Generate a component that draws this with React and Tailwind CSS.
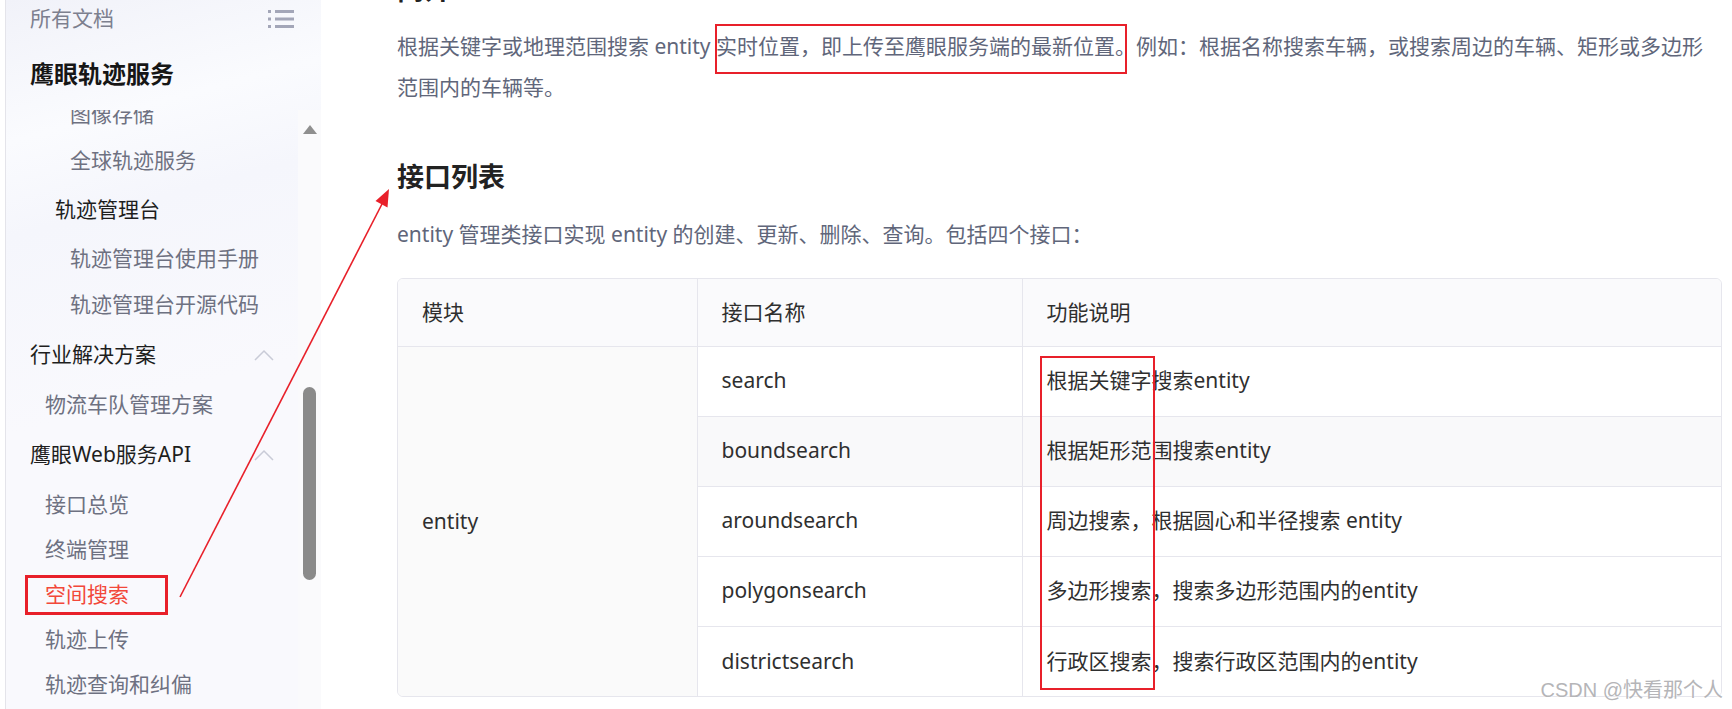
import React from 'react'

const navItems = [
  { label: '图像存储', pad: 'pl-[64px]', height: 'h-[46px]', tone: 'leaf' },
  { label: '全球轨迹服务', pad: 'pl-[64px]', height: 'h-[46px]', tone: 'leaf' },
  { label: '轨迹管理台', pad: 'pl-[49px]', height: 'h-[52px]', tone: 'sub' },
  { label: '轨迹管理台使用手册', pad: 'pl-[64px]', height: 'h-[46px]', tone: 'leaf' },
  { label: '轨迹管理台开源代码', pad: 'pl-[64px]', height: 'h-[46px]', tone: 'leaf' },
  { label: '行业解决方案', pad: 'pl-[24px]', height: 'h-[54px]', tone: 'head', chevron: true },
  { label: '物流车队管理方案', pad: 'pl-[39px]', height: 'h-[46px]', tone: 'leaf' },
  { label: '鹰眼Web服务API', pad: 'pl-[24px]', height: 'h-[54px]', tone: 'head', chevron: true },
  { label: '接口总览', pad: 'pl-[39px]', height: 'h-[45px]', tone: 'leaf' },
  { label: '终端管理', pad: 'pl-[39px]', height: 'h-[45px]', tone: 'leaf' },
  { label: '空间搜索', pad: 'pl-[19px]', height: 'h-[45px]', tone: 'active' },
  { label: '轨迹上传', pad: 'pl-[39px]', height: 'h-[45px]', tone: 'leaf' },
  { label: '轨迹查询和纠偏', pad: 'pl-[39px]', height: 'h-[45px]', tone: 'leaf' },
]

const rows = [
  { name: 'search', desc: '根据关键字搜索entity', bg: 'bg-white' },
  { name: 'boundsearch', desc: '根据矩形范围搜索entity', bg: 'bg-[#f9f9fa]' },
  { name: 'aroundsearch', desc: '周边搜索，根据圆心和半径搜索 entity', bg: 'bg-white' },
  { name: 'polygonsearch', desc: '多边形搜索，搜索多边形范围内的entity', bg: 'bg-white' },
  { name: 'districtsearch', desc: '行政区搜索，搜索行政区范围内的entity', bg: 'bg-white' },
]

function ListIcon() {
  return (
    <svg width="26" height="18" viewBox="0 0 26 18" className="text-[#a3a6b8]">
      <rect x="0" y="0" width="3" height="3" fill="currentColor" />
      <rect x="7" y="0" width="19" height="3" fill="currentColor" />
      <rect x="0" y="7.5" width="3" height="3" fill="currentColor" />
      <rect x="7" y="7.5" width="19" height="3" fill="currentColor" />
      <rect x="0" y="15" width="3" height="3" fill="currentColor" />
      <rect x="7" y="15" width="19" height="3" fill="currentColor" />
    </svg>
  )
}

function Chevron() {
  return (
    <svg width="20" height="12" viewBox="0 0 20 12" fill="none">
      <polyline points="1,11 10,2 19,11" stroke="#c9cbd7" strokeWidth="1.5" />
    </svg>
  )
}

function NavItem({ item }) {
  if (item.tone === 'active') {
    return (
      <div className={`flex items-center ${item.height} ${item.pad}`}>
        <div className="flex h-[40px] w-[143px] items-center border-[3px] border-[#e8202a] pl-[17px] text-[#f2483a]">
          {item.label}
        </div>
      </div>
    )
  }

  const tone = item.tone === 'leaf' ? 'text-[#6e7181]' : 'text-[#1e1e1e]'

  return (
    <div className={`flex items-center justify-between pr-[24px] ${item.height} ${item.pad} ${tone}`}>
      <span>{item.label}</span>
      {item.chevron && <Chevron />}
    </div>
  )
}

function Sidebar() {
  return (
    <aside className="ml-[5px] flex h-full w-[316px] shrink-0 flex-col border-l border-[#e4e4ea] bg-[linear-gradient(165deg,#f1f2f9_0%,#fafbfe_18%,#f5f6fc_30%,#f9f9fd_55%,#f9f9fd_100%)] text-[21px]">
      <div className="flex h-[38px] items-center justify-between pl-[24px] pr-[27px]">
        <span className="text-[#7d808f]">所有文档</span>
        <ListIcon />
      </div>
      <div className="mt-[16px] flex h-[40px] items-center pl-[24px] text-[24px] font-bold text-[#161616]">
        鹰眼轨迹服务
      </div>
      <div className="mt-[16px] flex min-h-0 flex-1">
        <div className="min-w-0 flex-1 overflow-hidden">
          <div className="-mt-[18px]">
            {navItems.map((item) => (
              <NavItem key={item.label} item={item} />
            ))}
          </div>
        </div>
        <div className="relative w-[23px] shrink-0 bg-[#fafafc]">
          <div className="absolute left-[5px] top-[15px] h-0 w-0 border-x-[7px] border-b-[9px] border-x-transparent border-b-[#8f8f8f]" />
          <div className="absolute left-[5px] top-[277px] h-[193px] w-[13px] rounded-full bg-[#8a8a8a]" />
        </div>
      </div>
    </aside>
  )
}

function InterfaceTable() {
  return (
    <div className="relative mt-[23px] overflow-hidden rounded-[6px] border border-[#e6e6ed]">
      <table className="w-full border-collapse text-left text-[21px] text-[#2f2f2f]">
        <colgroup>
          <col className="w-[299px]" />
          <col className="w-[325px]" />
          <col />
        </colgroup>
        <thead>
          <tr className="bg-[#fafafc]">
            <th className="h-[67px] border-b border-r border-[#e6e6ed] pl-6 font-normal">模块</th>
            <th className="h-[67px] border-b border-r border-[#e6e6ed] pl-6 font-normal">接口名称</th>
            <th className="h-[67px] border-b border-[#e6e6ed] pl-6 font-normal">功能说明</th>
          </tr>
        </thead>
        <tbody>
          {rows.map((row, i) => (
            <tr key={row.name}>
              {i === 0 && (
                <td rowSpan={rows.length} className="border-r border-[#e6e6ed] bg-[#fafafa] pl-6">
                  entity
                </td>
              )}
              <td
                className={`h-[70px] border-r border-[#e6e6ed] pl-6 ${row.bg} ${
                  i < rows.length - 1 ? 'border-b' : ''
                }`}
              >
                {row.name}
              </td>
              <td className={`h-[70px] border-[#e6e6ed] pl-6 ${row.bg} ${i < rows.length - 1 ? 'border-b' : ''}`}>
                {row.desc}
              </td>
            </tr>
          ))}
        </tbody>
      </table>
      <div className="pointer-events-none absolute left-[642px] top-[77px] h-[334px] w-[115px] border-2 border-[#e8202a]" />
    </div>
  )
}

function Content() {
  return (
    <main className="min-w-0 flex-1 overflow-hidden pl-[76px] pr-[10px]">
      <h1 className="-mt-[24px] text-[27px] font-bold leading-[27px] text-[#222]">简介</h1>
      <p className="mt-[23px] whitespace-nowrap text-[21px] leading-[41px] text-[#60667a]">
        根据关键字或地理范围搜索 entity{' '}
        <span className="relative">
          实时位置，即上传至鹰眼服务端的最新位置。
          <span className="pointer-events-none absolute -left-px right-[9px] top-[calc(50%+3px)] h-[50px] -translate-y-1/2 border-2 border-[#e8202a]" />
        </span>
        例如：根据名称搜索车辆，或搜索周边的车辆、矩形或多边形
        <br />
        范围内的车辆等。
      </p>
      <h2 className="mt-[49px] text-[27px] font-bold leading-[40px] text-[#222]">接口列表</h2>
      <p className="mt-[17px] text-[21px] leading-[41px] text-[#60667a]">
        entity 管理类接口实现 entity 的创建、更新、删除、查询。包括四个接口：
      </p>
      <InterfaceTable />
    </main>
  )
}

export default function App() {
  return (
    <div className="relative flex h-[709px] w-[1732px] overflow-hidden bg-white font-['Noto_Sans','Noto_Sans_CJK_SC',sans-serif]">
      <Sidebar />
      <Content />

      <svg className="pointer-events-none absolute inset-0" width="1732" height="709">
        <line x1="180" y1="597" x2="382" y2="204" stroke="#e8202a" strokeWidth="1.6" />
        <polygon points="389,189 387.5,207.5 375.5,201" fill="#e8202a" />
      </svg>

      <div className="pointer-events-none absolute bottom-[4px] right-[9px] font-['Liberation_Sans','Noto_Sans_CJK_SC',sans-serif] text-[20px] text-[#b5b5b8] [text-shadow:0_0_2px_#fff]">
        CSDN @快看那个人
      </div>
    </div>
  )
}
